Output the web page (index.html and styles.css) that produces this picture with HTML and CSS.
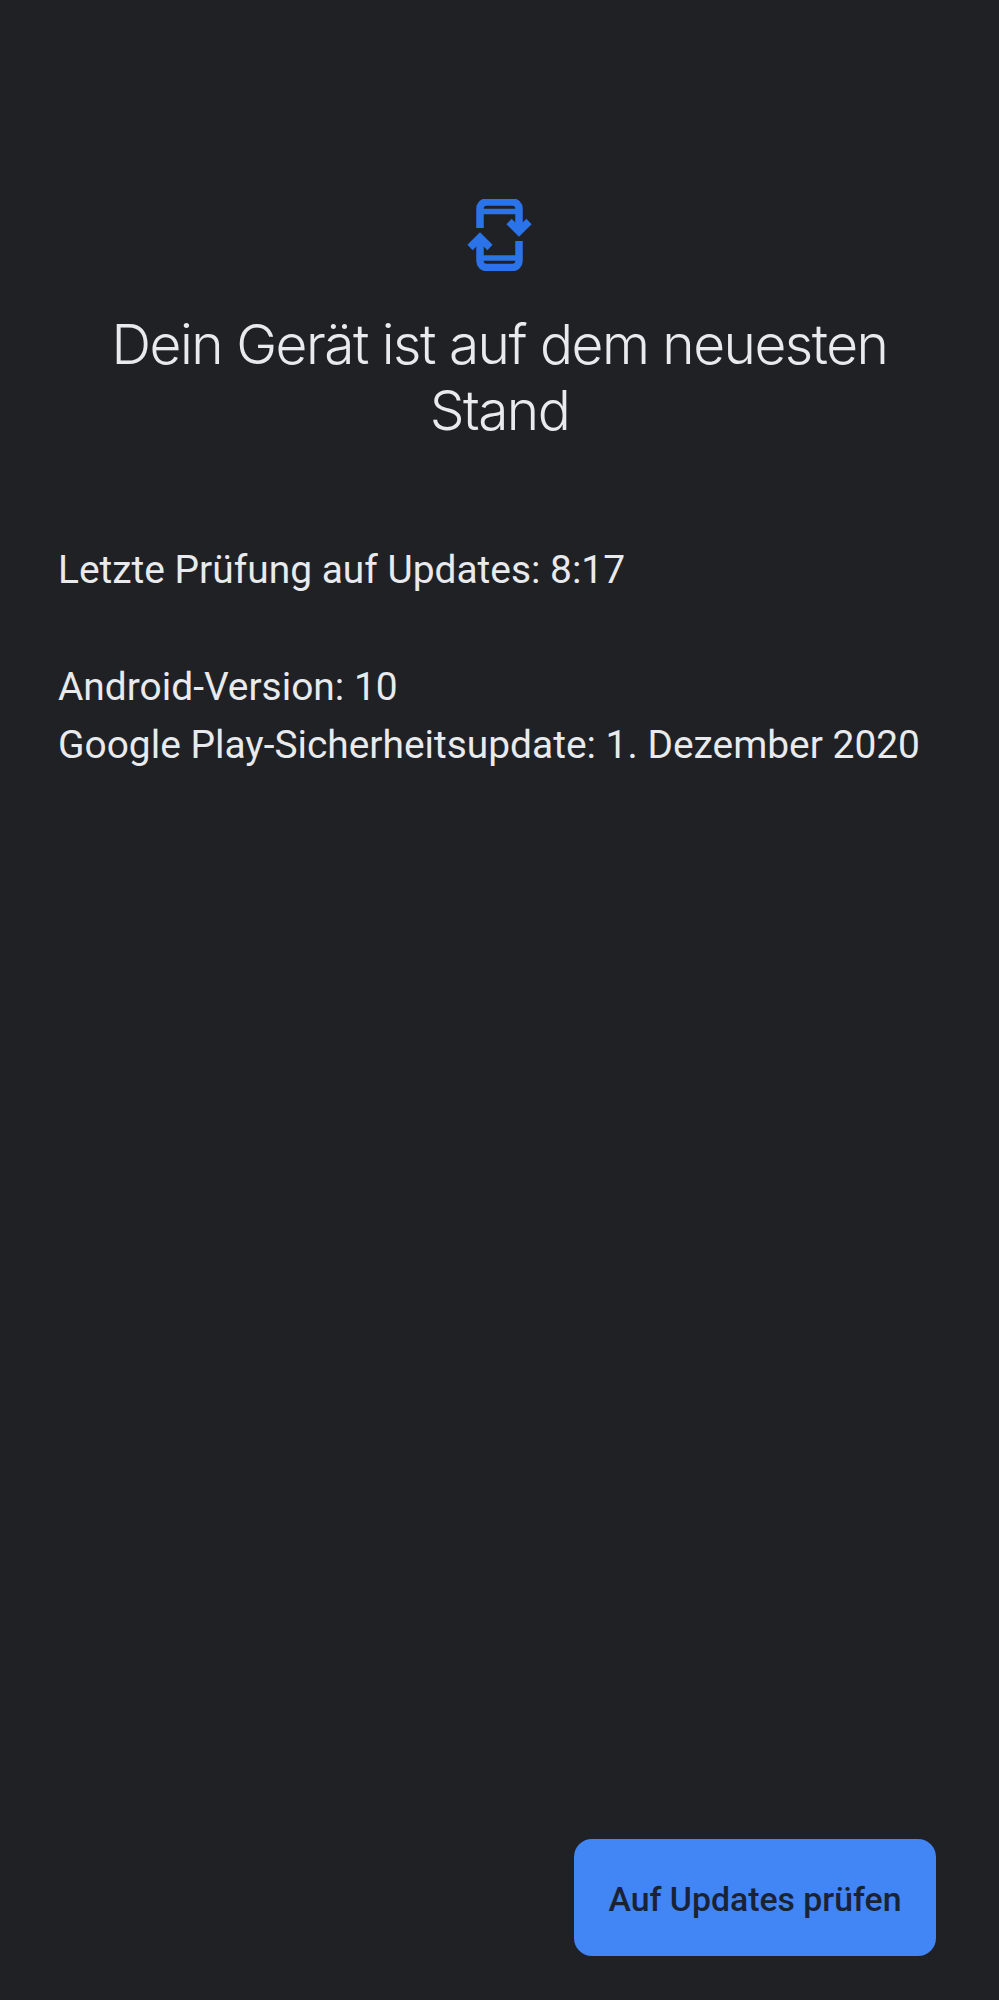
FILE: index.html
```html
<!DOCTYPE html>
<html lang="de">
<head>
  <meta charset="UTF-8" />
  <meta name="viewport" content="width=device-width, initial-scale=1" />
  <title>Systemupdate</title>
  <link rel="stylesheet" href="styles.css">
</head>
<body>

  <div class="screen">
    <div class="status-icon">
      <svg width="66" height="72" viewBox="0 0 66 72" fill="none" stroke="#2a73e8" stroke-width="7.5">
        <path d="M13 29V9.5a6.5 6.5 0 0 1 6.5-6.5h26a6.5 6.5 0 0 1 6.5 6.5V33" />
        <path d="M13 12.5h39" stroke-width="5.5" />
        <path d="M52 42V62a6.5 6.5 0 0 1-6.5 6.5h-26A6.5 6.5 0 0 1 13 62V38" />
        <path d="M13 59h39" stroke-width="5.5" />
        <path d="M42 22.5l10 10l10-10" />
        <path d="M3 48.5l10-10l10 10" />
      </svg>
    </div>

    <h1 class="title">Dein Gerät ist auf dem neuesten Stand</h1>

    <p class="info last-check">Letzte Prüfung auf Updates: 8:17</p>

    <div class="versions">
      <p class="info">Android-Version: 10</p>
      <p class="info">Google Play-Sicherheitsupdate: 1. Dezember 2020</p>
    </div>

    <div class="actions">
      <button class="check-button" type="button">Auf Updates prüfen</button>
    </div>
  </div>

</body>
</html>
```

FILE: styles.css
```css
body {
  background-color: #202125;
  margin: 0;
  font-family: 'Roboto', sans-serif;
}

.screen {
  display: flex;
  flex-direction: column;
  height: 2000px;
  box-sizing: border-box;
  padding: 199px 58px 44px;
}

.status-icon {
  display: flex;
  justify-content: center;
  height: 72px;
}

.title {
  margin: 40px 0 0;
  font-family: 'Inter', sans-serif;
  font-size: 55px;
  font-weight: 300;
  letter-spacing: -1.5px;
  line-height: 66px;
  text-align: center;
  color: #e8eaed;
}

.info {
  margin: 0;
  font-size: 38.9px;
  line-height: 58px;
  color: #e8eaed;
}

.last-check {
  margin-top: 98px;
}

.versions {
  margin-top: 59px;
}

.actions {
  display: flex;
  justify-content: flex-end;
  margin-top: auto;
  margin-right: 5px;
}

.check-button {
  width: 362px;
  height: 117px;
  padding: 4px 0 0;
  border: 0;
  border-radius: 18px;
  background-color: #4285f4;
  color: #1a2336;
  font-family: 'Roboto', sans-serif;
  font-size: 33.8px;
  font-weight: 500;
}
```
